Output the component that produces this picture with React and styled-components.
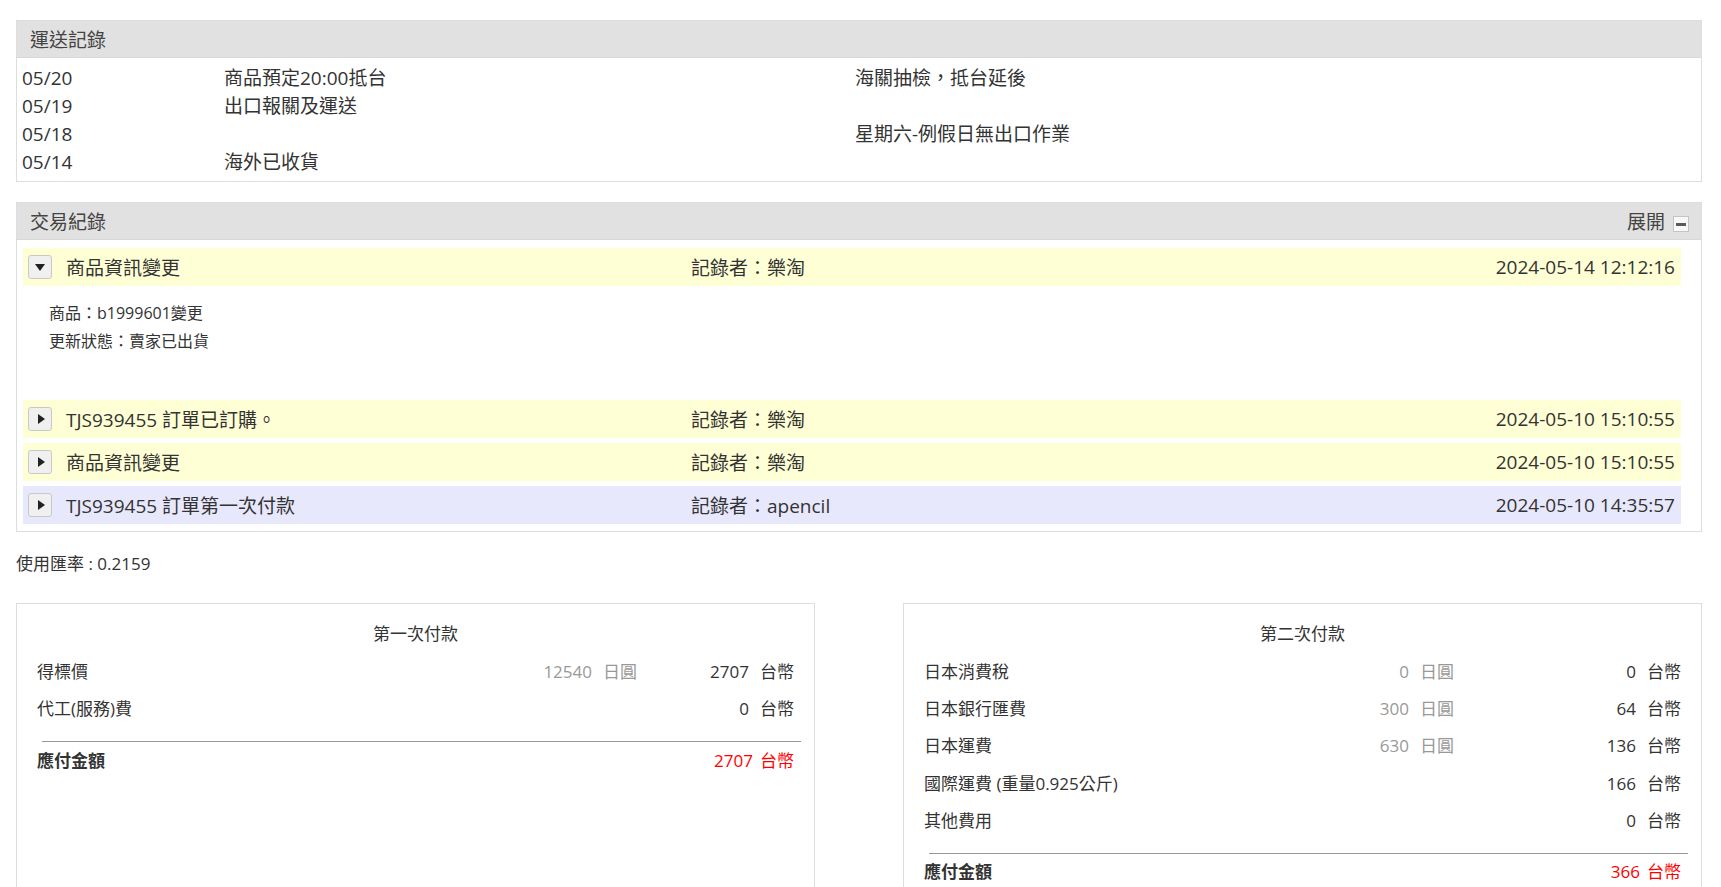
import React from 'react';
import styled, { createGlobalStyle } from 'styled-components';

const GlobalStyle = createGlobalStyle`
  body {
    margin: 0;
    background: #fff;
    color: #333;
    font-family: "Open Sans", "Noto Sans CJK TC", sans-serif;
  }
`;

const trackRows = [
  { date: '05/20', status: '商品預定20:00抵台', note: '海關抽檢，抵台延後' },
  { date: '05/19', status: '出口報關及運送', note: '' },
  { date: '05/18', status: '', note: '星期六-例假日無出口作業' },
  { date: '05/14', status: '海外已收貨', note: '' },
];

const logRows = [
  {
    title: '商品資訊變更',
    by: '樂淘',
    time: '2024-05-14 12:12:16',
    tone: 'yellow',
    open: true,
    details: ['商品：b1999601變更', '更新狀態：賣家已出貨'],
  },
  { title: 'TJS939455 訂單已訂購。', by: '樂淘', time: '2024-05-10 15:10:55', tone: 'yellow' },
  { title: '商品資訊變更', by: '樂淘', time: '2024-05-10 15:10:55', tone: 'yellow' },
  { title: 'TJS939455 訂單第一次付款', by: 'apencil', time: '2024-05-10 14:35:57', tone: 'blue' },
];

const firstPay = [
  { label: '得標價', yen: '12540', twd: '2707' },
  { label: '代工(服務)費', twd: '0' },
];

const secondPay = [
  { label: '日本消費稅', yen: '0', twd: '0' },
  { label: '日本銀行匯費', yen: '300', twd: '64' },
  { label: '日本運費', yen: '630', twd: '136' },
  { label: '國際運費 (重量0.925公斤)', twd: '166' },
  { label: '其他費用', twd: '0' },
];

const PayBox = ({ title, rows, total, twdWidth }) => (
  <Box>
    <BoxTitle>{title}</BoxTitle>
    {rows.map((r, i) => (
      <FeeRow key={i} $twd={twdWidth}>
        <span>{r.label}</span>
        <Yen>
          {r.yen !== undefined && (
            <>
              {r.yen}
              <Unit>日圓</Unit>
            </>
          )}
        </Yen>
        <Twd>
          {r.twd}
          <Unit>台幣</Unit>
        </Twd>
      </FeeRow>
    ))}
    <Divider />
    <FeeRow $twd={twdWidth} $total>
      <TotalLabel>應付金額</TotalLabel>
      <span />
      <TotalValue>
        {total}
        <TotalUnit>台幣</TotalUnit>
      </TotalValue>
    </FeeRow>
  </Box>
);

const App = () => {
  return (
    <Page>
      <GlobalStyle />
      <Panel>
        <PanelHeader>運送記錄</PanelHeader>
        <TrackBody>
          {trackRows.map((r) => (
            <TrackRow key={r.date}>
              <span>{r.date}</span>
              <span>{r.status}</span>
              <span>{r.note}</span>
            </TrackRow>
          ))}
        </TrackBody>
      </Panel>

      <Panel>
        <PanelHeader>
          <span>交易紀錄</span>
          <Expand>
            展開
            <MinusBox />
          </Expand>
        </PanelHeader>
        <LogBody>
          {logRows.map((r, i) => (
            <React.Fragment key={i}>
              <LogRow $tone={r.tone}>
                <Toggle>
                  <Arrow $open={r.open} />
                </Toggle>
                <span>{r.title}</span>
                <span>記錄者：{r.by}</span>
                <span>{r.time}</span>
              </LogRow>
              {r.details && (
                <Details>
                  {r.details.map((d) => (
                    <div key={d}>{d}</div>
                  ))}
                </Details>
              )}
            </React.Fragment>
          ))}
        </LogBody>
      </Panel>

      <Rate>使用匯率 : 0.2159</Rate>

      <Payments>
        <PayBox title="第一次付款" rows={firstPay} total="2707" twdWidth={157} />
        <PayBox title="第二次付款" rows={secondPay} total="366" twdWidth={227} />
      </Payments>
    </Page>
  );
};

const Page = styled.div`
  padding: 20px 19px 0 16px;
  display: flex;
  flex-direction: column;
`;

const Panel = styled.section`
  border: 1px solid #ddd;
  margin-bottom: 20px;
  font-size: 19px;
`;

const PanelHeader = styled.div`
  height: 37px;
  display: flex;
  align-items: center;
  justify-content: space-between;
  padding: 2px 12px 0 13px;
  box-sizing: border-box;
  background: #e1e1e1;
  border-bottom: 1px solid #d8d8d8;
  color: #444;
  line-height: 35px;
`;

const Expand = styled.span`
  display: flex;
  align-items: center;
  gap: 8px;
`;

const MinusBox = styled.span`
  width: 14px;
  height: 14px;
  border: 1px solid #c4c4c4;
  background: #f8f8f8;
  display: flex;
  align-items: center;
  justify-content: center;
  margin-top: 4px;
  &::after {
    content: '';
    width: 10px;
    height: 3px;
    background: #5a5a5a;
  }
`;

const TrackBody = styled.div`
  padding: 6px 0 5px 5px;
`;

const TrackRow = styled.div`
  display: grid;
  grid-template-columns: 202px 631px 1fr;
  line-height: 28px;
  height: 28px;
`;

const LogBody = styled.div`
  padding: 8px 20px 7px 6px;
  display: flex;
  flex-direction: column;
  gap: 5px;
`;

const LogRow = styled.div`
  height: 38px;
  display: grid;
  grid-template-columns: 24px 611px 1fr auto;
  column-gap: 14px;
  align-items: center;
  padding: 0 6px 0 5px;
  background: ${(p) => (p.$tone === 'blue' ? '#e8e8fd' : '#ffffd6')};
`;

const Toggle = styled.span`
  width: 22px;
  height: 22px;
  border: 1px solid #c8c8c8;
  border-radius: 3px;
  background: #f0f0f0;
  display: flex;
  align-items: center;
  justify-content: center;
`;

const Arrow = styled.span`
  width: 0;
  height: 0;
  ${(p) =>
    p.$open
      ? `border-left: 5px solid transparent;
         border-right: 5px solid transparent;
         border-top: 7px solid #222;`
      : `border-top: 5px solid transparent;
         border-bottom: 5px solid transparent;
         border-left: 7px solid #222;
         margin-left: 2px;`}
`;

const Details = styled.div`
  padding: 8px 0 40px 26px;
  font-size: 16px;
  line-height: 28px;
`;

const Rate = styled.div`
  margin-top: -2px;
  font-size: 17px;
  line-height: 28px;
`;

const Payments = styled.div`
  margin-top: 25px;
  display: grid;
  grid-template-columns: 1fr 1fr;
  gap: 88px;
`;

const Box = styled.div`
  border: 1px solid #ddd;
  padding: 16px 20px 40px;
  font-size: 17px;
`;

const BoxTitle = styled.div`
  text-align: center;
  line-height: 28px;
  margin-bottom: 4px;
`;

const FeeRow = styled.div`
  display: grid;
  grid-template-columns: 1fr auto ${(p) => p.$twd}px;
  align-items: center;
  height: ${(p) => (p.$total ? '34px' : '37.2px')};
`;

const Yen = styled.span`
  color: #999;
  text-align: right;
`;

const Twd = styled.span`
  text-align: right;
`;

const Unit = styled.span`
  margin-left: 11px;
`;

const Divider = styled.div`
  border-top: 1px solid #999;
  margin: 15px -7px 0 5px;
`;

const TotalLabel = styled.span`
  font-weight: 700;
`;

const TotalValue = styled.span`
  text-align: right;
  color: #f00;
`;

const TotalUnit = styled.span`
  margin-left: 7px;
`;

export default App;
